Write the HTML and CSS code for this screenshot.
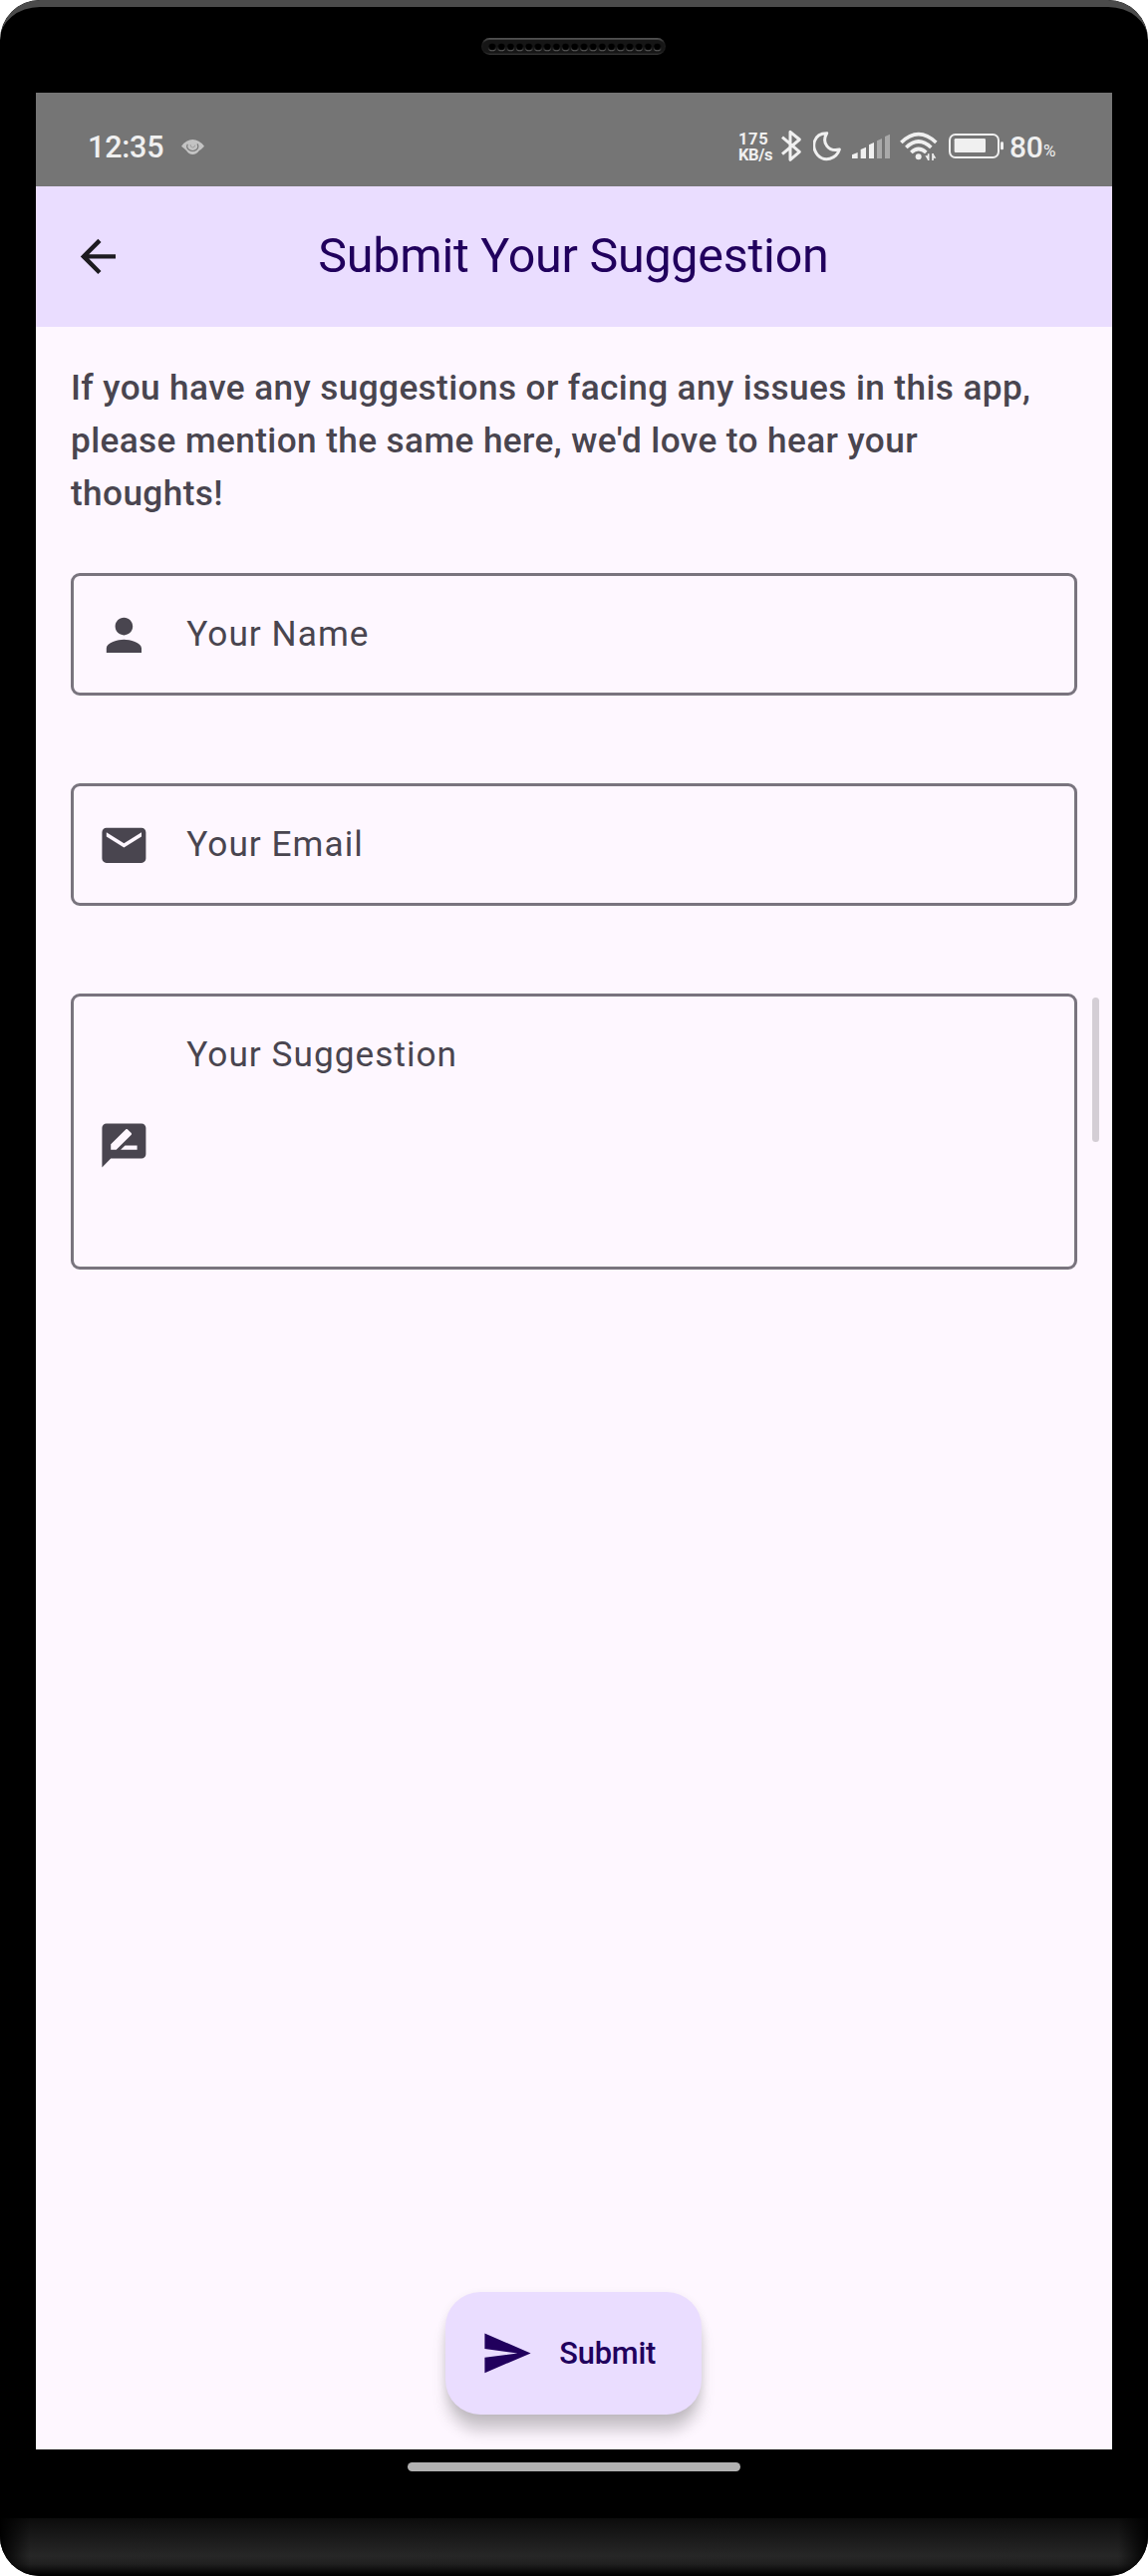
FILE: index.html
```html
<!DOCTYPE html>
<html lang="en">
<head>
<meta charset="utf-8">
<title>Submit Your Suggestion</title>
<link rel="stylesheet" href="styles.css">
</head>
<body>
<div class="phone">
  <div class="bezel-top">
    <svg class="speaker" viewBox="0 0 185 17" width="185" height="17">
      <defs>
        <linearGradient id="rim" x1="0" y1="0" x2="0" y2="1">
          <stop offset="0" stop-color="#555"/><stop offset=".3" stop-color="#1c1c1c"/>
          <stop offset=".8" stop-color="#1a1a1a"/><stop offset="1" stop-color="#383838"/>
        </linearGradient>
        <linearGradient id="hole" x1="0" y1="0" x2="0" y2="1">
          <stop offset=".4" stop-color="#111"/><stop offset="1" stop-color="#666"/>
        </linearGradient>
        <pattern id="holes" x="6.4" y="0" width="9.2" height="17" patternUnits="userSpaceOnUse">
          <circle cx="4.6" cy="9.4" r="3.9" fill="url(#hole)"/>
          <circle cx="4.6" cy="9" r="3.3" fill="#000"/>
        </pattern>
      </defs>
      <rect width="185" height="17" rx="8.5" fill="url(#rim)"/>
      <rect x="1.5" y="2" width="182" height="13.5" rx="6.7" fill="#161616"/>
      <rect x="6.4" width="174.8" height="17" fill="url(#holes)"/>
    </svg>
  </div>

  <div class="screen">
    <div class="status">
      <span class="clock">12:35</span>
      <svg class="eye" viewBox="0 0 69 45" width="23" height="15">
        <path d="M0 20Q15 0 34 0T69 20Q60 30 54 33Q46 45 34 45T15 33Q9 27 0 20Z" fill="#c3c3c3"/>
        <path d="M19 14Q14 23 22 30Q34 39 46 30Q54 22 48 13" fill="none" stroke="#777" stroke-width="3.5"/>
        <path d="M27 15Q27 24 35 24Q41 23 41 17" fill="none" stroke="#999" stroke-width="2.5"/>
      </svg>
      <span class="spacer"></span>
      <div class="speed"><span class="rate">175</span><span class="unit">KB/s</span></div>
      <svg class="bt" viewBox="189 60 66 99" width="22" height="33">
        <path d="M195 83L247 127L219 151V67L247 90L195 134" fill="none" stroke="#f0f0f0" stroke-width="9" stroke-linejoin="round"/>
      </svg>
      <svg class="moon" viewBox="288 60 84 99" width="28" height="33">
        <path d="M329 71C288 71 281 113 302 137C322 158 357 150 367 120C335 128 312 101 329 71Z" fill="none" stroke="#f0f0f0" stroke-width="9" stroke-linejoin="round"/>
      </svg>
      <svg class="signal" viewBox="402 60 120 99" width="40" height="33">
        <path d="M405 147V136L422 129V147ZM431 147V120L447 113V147ZM456 147V106L471 99V147Z" fill="#f0f0f0"/>
        <path d="M480 147V94L495 87V147ZM504 147V81L519 74V147Z" fill="#a9a9a9"/>
      </svg>
      <svg class="wifi" viewBox="549 60 114 99" width="38" height="33">
        <g fill="none" stroke="#f0f0f0" stroke-width="11">
          <path d="M553 99Q605 49 658 99"/>
          <path d="M568 114Q605 78 643 114"/>
          <path d="M583 129Q605 108 628 129"/>
        </g>
        <circle cx="605" cy="142" r="9" fill="#f0f0f0"/>
        <path d="M635 153V133M648 132V153" stroke="#f0f0f0" stroke-width="5"/>
        <path d="M625 139H634V152ZM658 146H649V132Z" fill="#f0f0f0"/>
      </svg>
      <svg class="battery" viewBox="696 60 168 99" width="56" height="33">
        <rect x="699" y="75" width="147" height="69" rx="17" fill="none" stroke="#f0f0f0" stroke-width="6"/>
        <rect x="713" y="87" width="94" height="42" rx="4" fill="#f0f0f0"/>
        <rect x="852" y="97" width="9" height="24" rx="4" fill="#f0f0f0"/>
      </svg>
      <span class="level">80</span><span class="percent">%</span>
    </div>

    <header class="appbar">
      <svg class="icon back" viewBox="0 0 24 24"><path d="M20 11H7.83l5.59-5.59L12 4l-8 8 8 8 1.41-1.41L7.83 13H20v-2z"/></svg>
      <h1>Submit Your Suggestion</h1>
    </header>

    <main>
      <p>If you have any suggestions or facing any issues in this app, please mention the same here, we'd love to hear your thoughts!</p>
      <div class="field">
        <svg class="icon" viewBox="0 0 24 24"><path d="M12 12c2.21 0 4-1.79 4-4s-1.79-4-4-4-4 1.79-4 4 1.79 4 4 4zm0 2c-2.67 0-8 1.34-8 4v2h16v-2c0-2.66-5.33-4-8-4z"/></svg>
        <span>Your Name</span>
      </div>
      <div class="field">
        <svg class="icon" viewBox="0 0 24 24"><path d="M20 4H4c-1.1 0-1.99.9-1.99 2L2 18c0 1.1.9 2 2 2h16c1.1 0 2-.9 2-2V6c0-1.1-.9-2-2-2zm0 4l-8 5-8-5V6l8 5 8-5v2z"/></svg>
        <span>Your Email</span>
      </div>
      <div class="field area">
        <svg class="icon" viewBox="0 0 24 24"><path d="M20 2H4c-1.1 0-1.99.9-1.99 2L2 22l4-4h14c1.1 0 2-.9 2-2V4c0-1.1-.9-2-2-2zM6 14v-2.47l6.88-6.88c.2-.2.51-.2.71 0l1.77 1.77c.2.2.2.51 0 .71L8.47 14H6zm12 0h-7.5l2-2H18v2z"/></svg>
        <span>Your Suggestion</span>
      </div>
      <div class="submit">
        <svg class="icon" viewBox="0 0 24 24"><path d="M2.01 21L23 12 2.01 3 2 10l15 2-15 2z"/></svg>
        <span>Submit</span>
      </div>
    </main>
    <div class="scrollbar"></div>
  </div>

  <div class="nav"><div class="pill"></div></div>
  <div class="chin"></div>
</div>
</body>
</html>
```
FILE: styles.css
```css
* { box-sizing: border-box; }
body { margin: 0; background: #fff; font-family: Roboto, sans-serif; }
svg { display: block; flex: none; }

.phone {
  display: flex;
  flex-direction: column;
  width: 1152px;
  height: 2585px;
  background: #000;
  border-radius: 40px;
  overflow: hidden;
}
.bezel-top {
  flex: none;
  height: 93px;
  padding-top: 31px;
  border-top: 7px solid #4b4b4b;
  border-radius: 40px 40px 0 0;
}
.speaker { margin-left: 483px; }

.screen {
  position: relative;
  flex: none;
  display: flex;
  flex-direction: column;
  height: 2365px;
  margin: 0 36px;
  background: #fef7ff;
}

.status {
  display: flex;
  align-items: flex-start;
  height: 94px;
  padding: 37px 57px 0 52px;
  background: #757575;
  color: #f0f0f0;
  line-height: 35px;
  white-space: nowrap;
}
.clock { font-size: 30.5px; font-weight: 500; letter-spacing: -0.2px; }
.eye { margin: 10px 0 0 18px; }
.spacer { flex: 1; }
.speed {
  display: flex;
  flex-direction: column;
  width: 35px;
  margin-top: 2px;
  font-size: 16.5px;
  font-weight: 700;
  line-height: 16px;
}
.rate { letter-spacing: 0.6px; }
.unit { letter-spacing: -0.4px; }
.bt { margin-left: 7px; }
.moon { margin-left: 11px; }
.signal { margin-left: 10px; }
.wifi { margin-left: 9px; }
.battery { margin-left: 11px; }
.level { width: 34px; margin-left: 5px; font-size: 30px; font-weight: 500; letter-spacing: -0.3px; }
.percent { width: 12px; font-size: 17px; line-height: 43px; }

.icon { width: 52.8px; height: 52.8px; fill: #49454f; }

.appbar {
  display: flex;
  align-items: center;
  height: 141px;
  padding: 0 36px;
  background: #eaddff;
}
.appbar .icon { fill: #1d1b20; }
.appbar h1 {
  flex: 1;
  margin: -2px 54px 0 0;
  color: #21005d;
  font-size: 48.4px;
  font-weight: 400;
  letter-spacing: -0.22px;
  text-align: center;
}

main {
  flex: 1;
  display: flex;
  flex-direction: column;
  padding: 35px;
  color: #49454f;
  font-size: 35.2px;
}
main p {
  margin: 0 0 53px;
  font-weight: 500;
  line-height: 53px;
  letter-spacing: 0.39px;
}
.field {
  display: flex;
  align-items: center;
  gap: 36.5px;
  height: 123px;
  margin-bottom: 88px;
  padding: 2px 24px 0;
  border: 3px solid #79747e;
  border-radius: 9px;
  letter-spacing: 1.03px;
}
.field span { line-height: 53px; margin-bottom: 3px; }
.area { height: 277px; }
.area .icon { margin-top: 26px; }
.area span { align-self: flex-start; margin-top: 30px; }

.submit {
  display: flex;
  align-items: center;
  align-self: center;
  gap: 26.5px;
  width: 257px;
  height: 123px;
  margin: auto 1px 0 0;
  padding-left: 35px;
  border-radius: 35px;
  background: #eaddff;
  color: #21005d;
  font-size: 30.8px;
  font-weight: 500;
  letter-spacing: -0.2px;
  box-shadow: 0 18px 15px -2px rgba(0, 0, 0, .2), 0 3px 10px rgba(0, 0, 0, .08);
}
.submit .icon { fill: #21005d; }

.scrollbar {
  position: absolute;
  top: 908px;
  right: 13px;
  width: 7px;
  height: 145px;
  border-radius: 4px;
  background: #d4ced5;
}

.nav { flex: none; height: 69px; padding: 13px 0 0 409px; }
.pill { width: 334px; height: 9px; border-radius: 4.5px; background: #b1b1b1; }
.chin {
  flex: 1;
  background:
    linear-gradient(90deg, #000, transparent 30px, transparent calc(100% - 30px), #000),
    linear-gradient(#0c0c0c, #272727 38px, #202020 46px, #000 57px);
}
```
